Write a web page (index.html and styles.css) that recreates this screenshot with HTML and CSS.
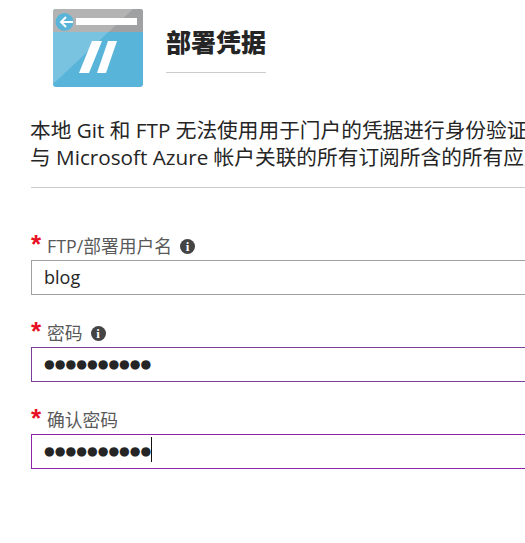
FILE: index.html

```html
<!DOCTYPE html>
<html>
<head>
    <title>部署凭据</title>
    <link rel="stylesheet" href="styles.css">
</head>
<body>

<div class="header">
    <svg class="blade-icon" width="90" height="78" viewBox="0 0 90 78">
        <rect x="0" y="0" width="90" height="78" rx="3" fill="#59b4d9"/>
        <path d="M3 0H87A3 3 0 0 1 90 3V23H0V3A3 3 0 0 1 3 0Z" fill="#a0a1a2"/>
        <path d="M0 3A3 3 0 0 1 3 0H80L0 75Z" fill="#fff" fill-opacity="0.2"/>
        <rect x="23" y="9" width="61" height="7" fill="#fff"/>
        <circle cx="11.5" cy="13" r="9" fill="#59b4d9"/>
        <path d="M20 13H8M13 8L8 13L13 18" fill="none" stroke="#fff" stroke-width="2"/>
        <path d="M39 32H49L36 64H26ZM55 32H64L53 64H44Z" fill="#fff"/>
    </svg>
    <h1 class="title">部署凭据</h1>
</div>

<p class="intro">本地 Git 和 FTP 无法使用用于门户的凭据进行身份验证<br>与 Microsoft Azure 帐户关联的所有订阅所含的所有应用</p>

<div class="divider"></div>

<div class="field">
    <div class="label-row">
        <span class="star">*</span>
        <span class="label">FTP/部署用户名</span>
        <span class="info">i</span>
    </div>
    <div class="box">blog</div>
</div>

<div class="field">
    <div class="label-row">
        <span class="star">*</span>
        <span class="label">密码</span>
        <span class="info">i</span>
    </div>
    <div class="box dark"><span class="dots">●●●●●●●●●●</span></div>
</div>

<div class="field">
    <div class="label-row">
        <span class="star">*</span>
        <span class="label">确认密码</span>
    </div>
    <div class="box focused"><span class="dots caret">●●●●●●●●●●</span></div>
</div>

</body>
</html>
```

FILE: styles.css

```css
html, body { overflow: hidden; }
body { margin: 0; height: 543px; background: #fff; color: #252525; font-family: "Open Sans", "Noto Sans CJK SC", sans-serif; }
.header { display: flex; padding: 9px 0 0 53px; }
.blade-icon { display: block; flex: none; }
.title { width: 100px; height: 64px; margin: 0 0 0 23px; padding-top: 14px; box-sizing: border-box; border-bottom: 1px solid #ccc; font-size: 25px; line-height: 36px; font-weight: 900; font-family: "Noto Sans CJK SC", sans-serif; white-space: nowrap; }
.intro { margin: 30px 0 0 30px; font-size: 20.7px; line-height: 27px; white-space: nowrap; }
.divider { height: 1px; margin: 16px 0 0 31px; background: #ccc; }
.field { margin: 0 0 0 31px; padding-top: 25px; }
.divider + .field { padding-top: 45px; }
.label-row { display: flex; align-items: center; height: 27px; color: #595959; }
.star { width: 16px; height: 27px; margin-top: -4px; color: #e81123; font-size: 26px; font-weight: 700; line-height: 27px; font-family: "Liberation Sans", sans-serif; }
.label { font-size: 17.8px; line-height: 27px; }
.info { width: 15px; height: 15px; margin-left: 8px; border-radius: 50%; background: #444; color: #fff; font-size: 13px; line-height: 15px; font-weight: 700; text-align: center; font-family: "Liberation Serif", serif; }
.box { height: 35px; box-sizing: border-box; padding-left: 12px; border: 1px solid #a0a0a0; border-right: 0; font-size: 18px; line-height: 33px; }
.box.dark { border-color: #7b3f98; }
.box.focused { border-color: #8e24aa; }
.dots { display: inline-block; height: 25px; margin-top: 2px; font-size: 12.3px; line-height: 29px; font-family: "DejaVu Sans", sans-serif; vertical-align: top; }
.caret { border-right: 1px solid #111; }
```
